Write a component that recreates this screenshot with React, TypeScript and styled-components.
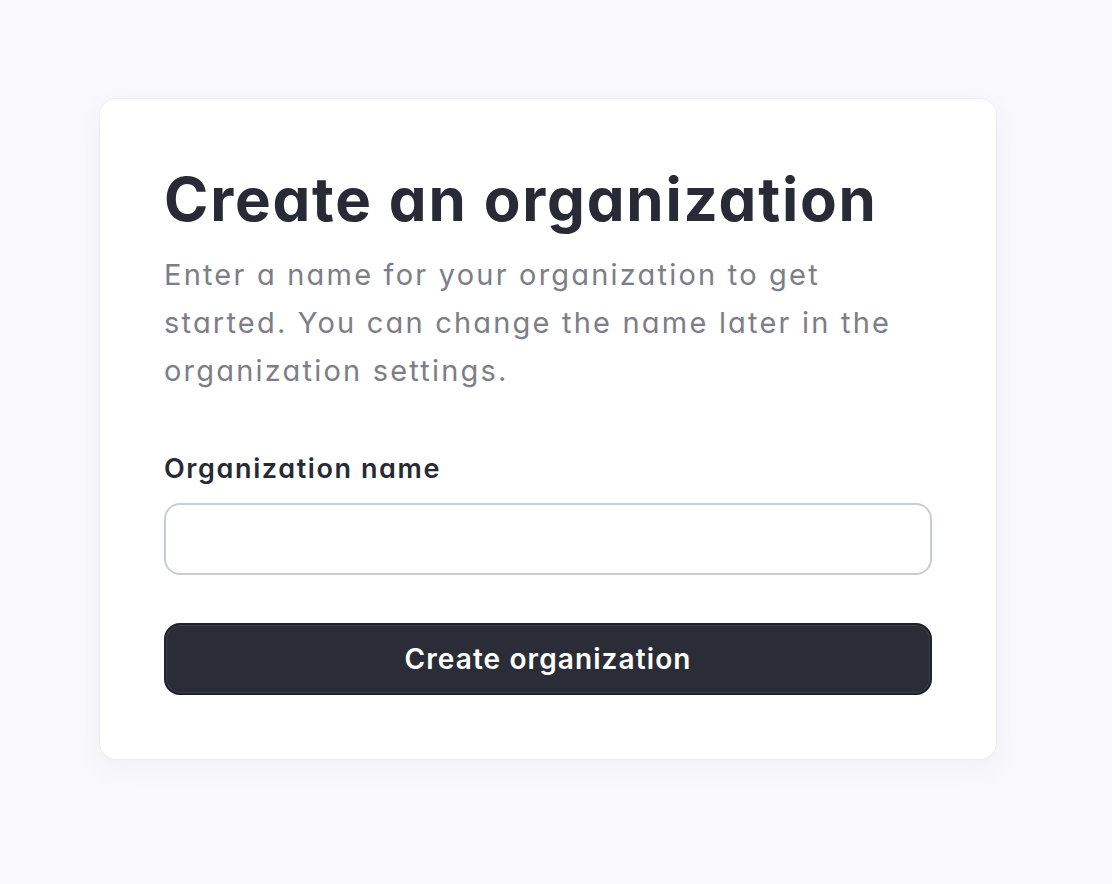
import React, { useState } from 'react';
import styled, { createGlobalStyle } from 'styled-components';

const GlobalStyle = createGlobalStyle`
  * {
    box-sizing: border-box;
  }
  body {
    margin: 0;
    background: #f9f9fd;
    font-family: Inter, "Noto Sans", sans-serif;
    font-feature-settings: "cv11";
    -webkit-font-smoothing: antialiased;
  }
`;

const Page = styled.main`
  min-height: 884px;
  padding: 99px 0 0 100px;
`;

const Card = styled.section`
  width: 896px;
  padding: 64px;
  background: #ffffff;
  border-radius: 16px;
  box-shadow: 0 0 0 1px rgba(40, 42, 60, 0.03), 0 8px 28px rgba(40, 42, 80, 0.05);
`;

const Title = styled.h1`
  margin: 0;
  font-size: 60px;
  line-height: 72px;
  font-weight: 700;
  letter-spacing: 1.8px;
  color: #282a35;
`;

const Lead = styled.p`
  margin: 16px 0 0;
  font-size: 29px;
  line-height: 48px;
  font-weight: 400;
  letter-spacing: 2.2px;
  color: #7c7e88;
`;

const Form = styled.form`
  display: flex;
  flex-direction: column;
  margin-top: 56px;
`;

const Label = styled.label`
  font-size: 27px;
  line-height: 36px;
  font-weight: 600;
  letter-spacing: 1.6px;
  color: #282a35;
`;

const Input = styled.input`
  height: 72px;
  margin-top: 16px;
  padding: 0 22px;
  border: 2px solid #c9cdd8;
  border-radius: 16px;
  font: inherit;
  font-size: 27px;
  color: #282a35;
  background: #ffffff;
  outline: none;
  &:focus {
    border-color: #8a8fa0;
  }
`;

const SubmitButton = styled.button`
  height: 72px;
  margin-top: 48px;
  border: 2px solid #1f212a;
  border-radius: 16px;
  background: #2a2d37;
  box-shadow: inset 0 0 0 1px #3c3f4b;
  color: #ffffff;
  font-family: inherit;
  font-size: 28px;
  font-weight: 600;
  letter-spacing: 1.1px;
  cursor: pointer;
`;

export default function App() {
  const [name, setName] = useState('');

  return (
    <Page>
      <GlobalStyle />
      <Card>
        <Title>Create an organization</Title>
        <Lead>
          Enter a name for your organization to get started. You can change the name later in the
          organization settings.
        </Lead>
        <Form onSubmit={e => e.preventDefault()}>
          <Label htmlFor="org-name">Organization name</Label>
          <Input id="org-name" value={name} onChange={e => setName(e.target.value)} />
          <SubmitButton type="submit">Create organization</SubmitButton>
        </Form>
      </Card>
    </Page>
  );
}
